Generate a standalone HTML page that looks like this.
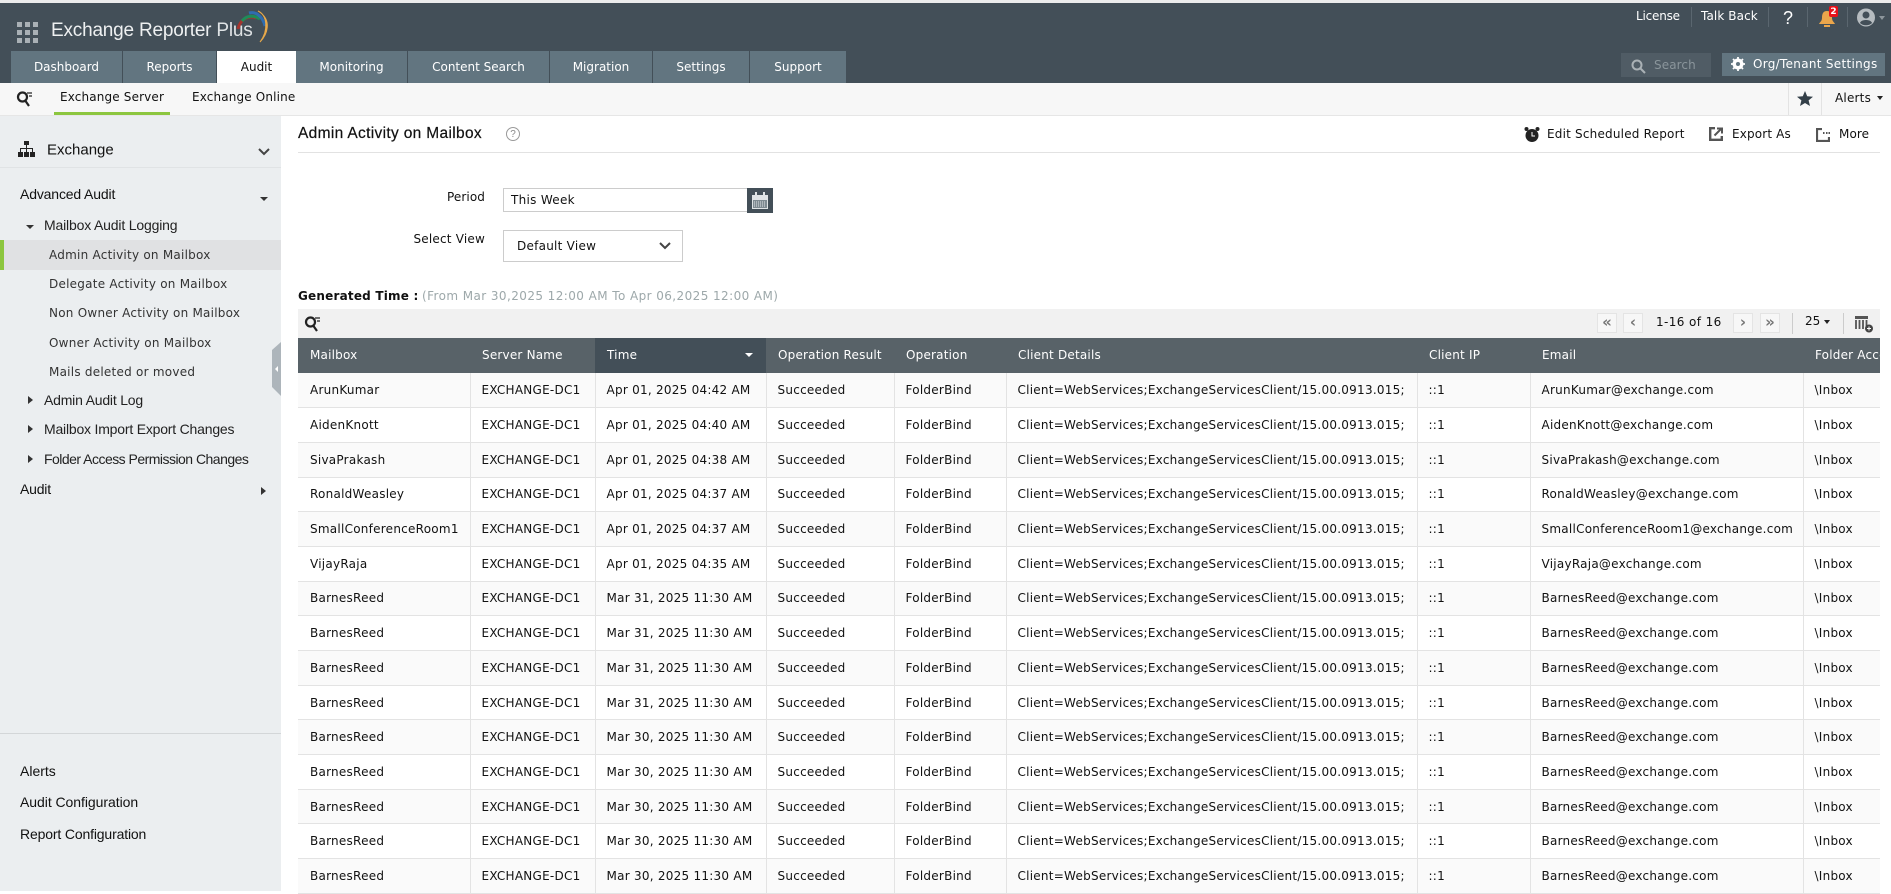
<!DOCTYPE html>
<html><head><meta charset="utf-8"><style>
*{box-sizing:border-box}
html,body{margin:0;padding:0;width:1891px;height:891px;overflow:hidden;background:#fff;font-family:"DejaVu Sans","Liberation Sans",sans-serif;font-size:12px;color:#111}
.a{position:absolute;white-space:nowrap}
.c{display:flex;align-items:center;justify-content:center}
.tab{position:absolute;top:51px;height:32px;background:#627580;color:#fff;display:flex;align-items:center;justify-content:center;border-right:1px solid #434f58;letter-spacing:0}
.m{position:absolute;white-space:nowrap;color:#333;letter-spacing:.24px;transform:translateY(-50%)}
.s{position:absolute;white-space:nowrap;font-family:"Liberation Sans",sans-serif;font-size:14px;color:#111;transform:translateY(-50%)}
table{position:absolute;left:298px;top:338px;width:1582px;border-collapse:collapse;table-layout:fixed}
th{height:35px;background:#586268;color:#fff;font-weight:400;text-align:left;padding:0 0 2px 12px;white-space:nowrap;overflow:hidden;letter-spacing:.2px}
td{height:34.7px;padding:0 0 0 11px;border-right:1px solid #e3e3e3;border-bottom:1px solid #e3e3e3;white-space:nowrap;overflow:hidden;letter-spacing:.25px;color:#111}
td:first-child{padding-left:12px}
tr:nth-child(odd) td{background:#fafafa}
tr td:last-child{border-right:0}
th.t{background:#434f58}
.pb{position:absolute;top:313px;width:20px;height:20px;border:1px solid #e4e4e4;background:#f7f7f7;color:#777;font-size:15px;display:flex;align-items:center;justify-content:center;font-weight:bold;padding-bottom:2px}
</style></head><body>
<div class="a" style="left:0;top:0;width:1891px;height:3px;background:#ececec"></div>
<div class="a" style="left:0;top:3px;width:1891px;height:80px;background:#434f58"></div>
<svg class="a" style="left:17px;top:22px" width="21" height="21" fill="#a9b0b5"><rect x="0" y="0" width="5" height="5"/><rect x="8" y="0" width="5" height="5"/><rect x="16" y="0" width="5" height="5"/><rect x="0" y="8" width="5" height="5"/><rect x="8" y="8" width="5" height="5"/><rect x="16" y="8" width="5" height="5"/><rect x="0" y="16" width="5" height="5"/><rect x="8" y="16" width="5" height="5"/><rect x="16" y="16" width="5" height="5"/></svg>
<div class="a" style="left:51px;top:20px;font-family:'Liberation Sans',sans-serif;font-size:19px;color:#eef0f1;line-height:22px;letter-spacing:-.2px">Exchange Reporter <span style="font-weight:400;color:#dfe3e5">Plus</span></div>
<svg class="a" style="left:236px;top:8px" width="36" height="36" fill="none"><path d="M2 21C4 11 13 7 20 10" stroke="#a5342e" stroke-width="3"/><path d="M6 13C11 7 18 7 24 11" stroke="#1f8c58" stroke-width="3"/><path d="M13 5C20 3 27 9 29 18" stroke="#2f6db0" stroke-width="3"/><path d="M22 3C31 7 33 22 24 34C31 27 37 12 22 3Z" fill="#e8a94a" stroke="#e8a94a"/></svg>
<div class="tab" style="left:11px;width:112px">Dashboard</div>
<div class="tab" style="left:123px;width:94px">Reports</div>
<div class="tab" style="left:217px;width:79px;background:#fff;color:#111;border:0">Audit</div>
<div class="tab" style="left:296px;width:112px">Monitoring</div>
<div class="tab" style="left:408px;width:142px">Content Search</div>
<div class="tab" style="left:550px;width:103px">Migration</div>
<div class="tab" style="left:653px;width:97px">Settings</div>
<div class="tab" style="left:750px;width:96px;border:0">Support</div>

<div class="a" style="left:1636px;top:8px;color:#fff;line-height:16px;letter-spacing:-.2px">License</div>
<div class="a" style="left:1701px;top:8px;color:#fff;line-height:16px;letter-spacing:.1px">Talk Back</div>
<div class="a" style="left:1691px;top:7px;width:1px;height:20px;background:#5a666f"></div>
<div class="a" style="left:1768px;top:7px;width:1px;height:20px;background:#5a666f"></div>
<div class="a" style="left:1807px;top:7px;width:1px;height:20px;background:#5a666f"></div>
<div class="a" style="left:1847px;top:7px;width:1px;height:20px;background:#5a666f"></div>
<div class="a" style="left:1783px;top:8px;color:#fff;font-size:18px;line-height:21px;font-family:'Liberation Sans',sans-serif">?</div>
<svg class="a" style="left:1818px;top:10px" width="18" height="18"><path d="M9 1C5 1 4 4 4 8C4 11 2 12 1 14H17C16 12 14 11 14 8C14 4 13 1 9 1Z" fill="#eba64b"/><rect x="6" y="15" width="6" height="2" fill="#eba64b"/></svg>
<div class="a c" style="left:1829px;top:6px;width:9px;height:11px;background:#e8121a;color:#fff;font-size:9px;border-radius:2px;font-weight:bold">2</div>
<svg class="a" style="left:1857px;top:8px" width="18" height="19"><circle cx="9" cy="9.5" r="9" fill="#b6bcc0"/><circle cx="9" cy="7" r="3.5" fill="#434f58"/><path d="M3 15C4 11 14 11 15 15C12 18 6 18 3 15Z" fill="#434f58"/></svg>
<div class="a" style="left:1879px;top:16px;border:3.5px solid transparent;border-top:4px solid #8d969c"></div>
<div class="a" style="left:1621px;top:53px;width:90px;height:24px;background:#505c65"></div>
<svg class="a" style="left:1631px;top:59px" width="15" height="15" fill="none" stroke="#aab1b5" stroke-width="2"><circle cx="6" cy="6" r="4.5"/><path d="M9.5 9.5L14 14"/></svg>
<div class="a" style="left:1654px;top:57px;color:#8a959b;line-height:16px;letter-spacing:.1px">Search</div>
<div class="a" style="left:1722px;top:53px;width:163px;height:23px;background:#627580"></div>
<svg class="a" style="left:1731px;top:57px" width="14" height="14"><circle cx="7" cy="7" r="4" fill="none" stroke="#fff" stroke-width="3"/><path d="M7 0V14M0 7H14M2 2L12 12M12 2L2 12" stroke="#fff" stroke-width="1.8"/><circle cx="7" cy="7" r="2" fill="#627580"/></svg>
<div class="a" style="left:1753px;top:56px;color:#fff;line-height:16px;letter-spacing:.3px">Org/Tenant Settings</div>

<div class="a" style="left:0;top:83px;width:1891px;height:33px;background:#f7f7f7;border-bottom:1px solid #e6e6e6"></div>
<svg class="a" style="left:16px;top:90px" width="17" height="18" fill="none" stroke="#222" stroke-width="2.2"><circle cx="6.5" cy="7" r="4.5"/><path d="M9.5 11L13 16"/><path d="M11 3H16M13 6H16" stroke-width="1.2"/></svg>
<div class="a" style="left:60px;top:89px;line-height:16px;letter-spacing:.15px">Exchange Server</div>
<div class="a" style="left:192px;top:89px;line-height:16px;letter-spacing:.15px">Exchange Online</div>
<div class="a" style="left:54px;top:112px;width:116px;height:3px;background:#8cc63f"></div>
<div class="a" style="left:1788px;top:83px;width:1px;height:32px;background:#e3e3e3"></div>
<div class="a" style="left:1821px;top:83px;width:1px;height:32px;background:#e3e3e3"></div>
<svg class="a" style="left:1797px;top:91px" width="16" height="15"><path d="M8 0L10.2 5.2L16 5.7L11.6 9.4L13 15L8 12L3 15L4.4 9.4L0 5.7L5.8 5.2Z" fill="#333f48"/></svg>
<div class="a" style="left:1835px;top:90px;line-height:16px;letter-spacing:.2px">Alerts</div>
<div class="a" style="left:1877px;top:96px;border:3.5px solid transparent;border-top:4px solid #222"></div>

<div class="a" style="left:0;top:116px;width:281px;height:775px;background:#ebeef0"></div>
<div class="a" style="left:0;top:167px;width:281px;height:1px;background:#e0e3e5"></div>
<svg class="a" style="left:18px;top:141px" width="17" height="17" fill="#222"><rect x="6" y="0" width="5" height="4"/><rect x="8" y="4" width="1" height="3"/><rect x="2" y="7" width="13" height="1"/><rect x="2" y="7" width="1" height="4"/><rect x="8" y="7" width="1" height="4"/><rect x="14" y="7" width="1" height="4"/><rect x="0" y="11" width="5" height="5"/><rect x="6" y="11" width="5" height="5"/><rect x="12" y="11" width="5" height="5"/></svg>
<div class="s" style="left:47px;top:150px;font-size:15px">Exchange</div>
<svg class="a" style="left:258px;top:148px" width="12" height="8" fill="none" stroke="#444" stroke-width="2"><path d="M1 1L6 6L11 1"/></svg>
<div class="s" style="left:20px;top:194px;letter-spacing:-.15px">Advanced Audit</div>
<div class="a" style="left:260px;top:197px;border:4px solid transparent;border-top:4px solid #333"></div>
<div class="a" style="left:26px;top:225px;border:4px solid transparent;border-top:4px solid #333"></div>
<div class="s" style="left:44px;top:225px;color:#222;letter-spacing:-.17px">Mailbox Audit Logging</div>
<div class="a" style="left:0;top:240px;width:281px;height:30px;background:#e0e1e3"></div>
<div class="a" style="left:0;top:240px;width:4px;height:30px;background:#8cc63f"></div>
<div class="m" style="left:49px;top:255px">Admin Activity on Mailbox</div>
<div class="m" style="left:49px;top:284px">Delegate Activity on Mailbox</div>
<div class="m" style="left:49px;top:313px">Non Owner Activity on Mailbox</div>
<div class="m" style="left:49px;top:343px">Owner Activity on Mailbox</div>
<div class="m" style="left:49px;top:372px">Mails deleted or moved</div>
<div class="a" style="left:28px;top:396px;border:4px solid transparent;border-left:5px solid #333"></div>
<div class="s" style="left:44px;top:400px;color:#222;letter-spacing:-.2px">Admin Audit Log</div>
<div class="a" style="left:28px;top:425px;border:4px solid transparent;border-left:5px solid #333"></div>
<div class="s" style="left:44px;top:429px;color:#222;letter-spacing:-.2px">Mailbox Import Export Changes</div>
<div class="a" style="left:28px;top:455px;border:4px solid transparent;border-left:5px solid #333"></div>
<div class="s" style="left:44px;top:459px;color:#222;letter-spacing:-.52px">Folder Access Permission Changes</div>
<div class="s" style="left:20px;top:489px;letter-spacing:-.2px">Audit</div>
<div class="a" style="left:261px;top:487px;border:4px solid transparent;border-left:5px solid #333"></div>
<svg class="a" style="left:272px;top:342px" width="9" height="54"><path d="M9 0V54L0 45V8Z" fill="#adb5bb"/><path d="M3 27L6 24V30Z" fill="#fff"/></svg>
<div class="a" style="left:0;top:733px;width:281px;height:1px;background:#d3d6d8"></div>
<div class="s" style="left:20px;top:771px">Alerts</div>
<div class="s" style="left:20px;top:802px;letter-spacing:-.05px">Audit Configuration</div>
<div class="s" style="left:20px;top:834px;letter-spacing:-.15px">Report Configuration</div>

<div class="s" style="left:298px;top:134px;font-size:15.5px;letter-spacing:.33px;-webkit-text-stroke:.2px #111">Admin Activity on Mailbox</div>
<div class="a c" style="left:506px;top:127px;width:14px;height:14px;border:1.5px solid #999;border-radius:50%;color:#888;font-size:10px;font-family:'Liberation Sans',sans-serif">?</div>
<div class="a" style="left:298px;top:152px;width:1582px;height:1px;background:#e2e2e2"></div>
<svg class="a" style="left:1524px;top:126px" width="16" height="17"><circle cx="8" cy="9.5" r="6.5" fill="#222"/><circle cx="2.5" cy="3" r="2" fill="#222"/><circle cx="13.5" cy="3" r="2" fill="#222"/><path d="M8 6V10H11" stroke="#fff" fill="none"/></svg>
<div class="a" style="left:1547px;top:126px;line-height:16px;letter-spacing:.2px">Edit Scheduled Report</div>
<svg class="a" style="left:1709px;top:127px" width="14" height="14" fill="none" stroke="#555" stroke-width="2.4"><path d="M6 1.2H1.2V12.8H12.8V9"/><path d="M5.5 8.5L12 2M8 1.5H13V6.5" stroke-width="2"/></svg>
<div class="a" style="left:1732px;top:126px;line-height:16px;letter-spacing:.15px">Export As</div>
<svg class="a" style="left:1816px;top:128px" width="14" height="14" fill="none" stroke="#555" stroke-width="2.2"><path d="M6 1H1V13H13V9"/><path d="M7 5H8.5M10 5H11.5M12.5 5H14" stroke-width="2"/></svg>
<div class="a" style="left:1839px;top:126px;line-height:16px;letter-spacing:.1px">More</div>

<div class="a" style="right:1406px;top:189px;line-height:16px;letter-spacing:.1px">Period</div>
<div class="a" style="left:503px;top:188px;width:245px;height:24px;border:1px solid #ccc;padding-left:7px;line-height:22px;letter-spacing:.3px">This Week</div>
<div class="a" style="left:747px;top:188px;width:26px;height:25px;background:#434f58"></div>
<svg class="a" style="left:751px;top:192px" width="18" height="18"><rect x="1" y="3" width="16" height="14" fill="#dfe3e5"/><rect x="2" y="8" width="14" height="8" fill="#7e8a91"/><path d="M3 10H15M3 12H15M3 14H15" stroke="#dfe3e5" stroke-dasharray="1 1"/><rect x="4" y="0" width="2" height="5" fill="#dfe3e5"/><rect x="12" y="0" width="2" height="5" fill="#dfe3e5"/></svg>
<div class="a" style="right:1406px;top:231px;line-height:16px;letter-spacing:.2px">Select View</div>
<div class="a" style="left:503px;top:230px;width:180px;height:32px;border:1px solid #ccc;padding-left:13px;line-height:30px;letter-spacing:.25px">Default View</div>
<svg class="a" style="left:659px;top:242px" width="12" height="8" fill="none" stroke="#444" stroke-width="2"><path d="M1 1L6 6L11 1"/></svg>
<div class="a" style="left:298px;top:288px;line-height:16px;font-weight:bold;letter-spacing:.2px;font-size:12px">Generated Time :</div>
<div class="a" style="left:422px;top:288px;line-height:16px;color:#9da8aa;letter-spacing:.42px">(From Mar 30,2025 12:00 AM To Apr 06,2025 12:00 AM)</div>

<div class="a" style="left:298px;top:309px;width:1582px;height:29px;background:#f1f1f1"></div>
<svg class="a" style="left:304px;top:315px" width="17" height="17" fill="none" stroke="#222" stroke-width="2.2"><circle cx="6.5" cy="7" r="4.5"/><path d="M9.5 11L13 16"/><path d="M11 3H16M13 6H16" stroke-width="1.2"/></svg>
<div class="pb" style="left:1597px">«</div><div class="pb" style="left:1623px">‹</div>
<div class="a" style="left:1656px;top:314px;line-height:16px;letter-spacing:.4px">1-16 of 16</div>
<div class="pb" style="left:1733px">›</div><div class="pb" style="left:1760px">»</div>
<div class="a" style="left:1792px;top:313px;width:1px;height:21px;background:#ccc"></div>
<div class="a" style="left:1805px;top:313px;line-height:16px">25</div>
<div class="a" style="left:1824px;top:320px;border:3.5px solid transparent;border-top:4px solid #222"></div>
<div class="a" style="left:1843px;top:313px;width:1px;height:21px;background:#ccc"></div>
<svg class="a" style="left:1855px;top:316px" width="19" height="17"><rect x="0" y="0" width="13" height="3" fill="#555"/><path d="M1 4V13M4.5 4V13M8 4V13M11.500 4V11" stroke="#555" stroke-width="1.8"/><circle cx="14" cy="12.500" r="4" fill="#444"/><path d="M12 12.500H16M14 10.500V14.500" stroke="#fff"/></svg>

<table><colgroup><col style="width:172px"><col style="width:125px"><col style="width:171px"><col style="width:128px"><col style="width:112px"><col style="width:411px"><col style="width:113px"><col style="width:273px"><col style="width:77px"></colgroup>
<thead><tr><th>Mailbox</th><th>Server Name</th><th class="t">Time<span style="float:right;margin:5px 13px 0 0;border:4px solid transparent;border-top:4px solid #fff"></span></th><th>Operation Result</th><th>Operation</th><th>Client Details</th><th>Client IP</th><th>Email</th><th>Folder Access</th></tr></thead>
<tbody>
<tr><td>ArunKumar</td><td>EXCHANGE-DC1</td><td>Apr 01, 2025 04:42 AM</td><td>Succeeded</td><td>FolderBind</td><td>Client=WebServices;ExchangeServicesClient/15.00.0913.015;</td><td>::1</td><td>ArunKumar@exchange.com</td><td>\Inbox</td></tr>
<tr><td>AidenKnott</td><td>EXCHANGE-DC1</td><td>Apr 01, 2025 04:40 AM</td><td>Succeeded</td><td>FolderBind</td><td>Client=WebServices;ExchangeServicesClient/15.00.0913.015;</td><td>::1</td><td>AidenKnott@exchange.com</td><td>\Inbox</td></tr>
<tr><td>SivaPrakash</td><td>EXCHANGE-DC1</td><td>Apr 01, 2025 04:38 AM</td><td>Succeeded</td><td>FolderBind</td><td>Client=WebServices;ExchangeServicesClient/15.00.0913.015;</td><td>::1</td><td>SivaPrakash@exchange.com</td><td>\Inbox</td></tr>
<tr><td>RonaldWeasley</td><td>EXCHANGE-DC1</td><td>Apr 01, 2025 04:37 AM</td><td>Succeeded</td><td>FolderBind</td><td>Client=WebServices;ExchangeServicesClient/15.00.0913.015;</td><td>::1</td><td>RonaldWeasley@exchange.com</td><td>\Inbox</td></tr>
<tr><td>SmallConferenceRoom1</td><td>EXCHANGE-DC1</td><td>Apr 01, 2025 04:37 AM</td><td>Succeeded</td><td>FolderBind</td><td>Client=WebServices;ExchangeServicesClient/15.00.0913.015;</td><td>::1</td><td>SmallConferenceRoom1@exchange.com</td><td>\Inbox</td></tr>
<tr><td>VijayRaja</td><td>EXCHANGE-DC1</td><td>Apr 01, 2025 04:35 AM</td><td>Succeeded</td><td>FolderBind</td><td>Client=WebServices;ExchangeServicesClient/15.00.0913.015;</td><td>::1</td><td>VijayRaja@exchange.com</td><td>\Inbox</td></tr>
<tr><td>BarnesReed</td><td>EXCHANGE-DC1</td><td>Mar 31, 2025 11:30 AM</td><td>Succeeded</td><td>FolderBind</td><td>Client=WebServices;ExchangeServicesClient/15.00.0913.015;</td><td>::1</td><td>BarnesReed@exchange.com</td><td>\Inbox</td></tr>
<tr><td>BarnesReed</td><td>EXCHANGE-DC1</td><td>Mar 31, 2025 11:30 AM</td><td>Succeeded</td><td>FolderBind</td><td>Client=WebServices;ExchangeServicesClient/15.00.0913.015;</td><td>::1</td><td>BarnesReed@exchange.com</td><td>\Inbox</td></tr>
<tr><td>BarnesReed</td><td>EXCHANGE-DC1</td><td>Mar 31, 2025 11:30 AM</td><td>Succeeded</td><td>FolderBind</td><td>Client=WebServices;ExchangeServicesClient/15.00.0913.015;</td><td>::1</td><td>BarnesReed@exchange.com</td><td>\Inbox</td></tr>
<tr><td>BarnesReed</td><td>EXCHANGE-DC1</td><td>Mar 31, 2025 11:30 AM</td><td>Succeeded</td><td>FolderBind</td><td>Client=WebServices;ExchangeServicesClient/15.00.0913.015;</td><td>::1</td><td>BarnesReed@exchange.com</td><td>\Inbox</td></tr>
<tr><td>BarnesReed</td><td>EXCHANGE-DC1</td><td>Mar 30, 2025 11:30 AM</td><td>Succeeded</td><td>FolderBind</td><td>Client=WebServices;ExchangeServicesClient/15.00.0913.015;</td><td>::1</td><td>BarnesReed@exchange.com</td><td>\Inbox</td></tr>
<tr><td>BarnesReed</td><td>EXCHANGE-DC1</td><td>Mar 30, 2025 11:30 AM</td><td>Succeeded</td><td>FolderBind</td><td>Client=WebServices;ExchangeServicesClient/15.00.0913.015;</td><td>::1</td><td>BarnesReed@exchange.com</td><td>\Inbox</td></tr>
<tr><td>BarnesReed</td><td>EXCHANGE-DC1</td><td>Mar 30, 2025 11:30 AM</td><td>Succeeded</td><td>FolderBind</td><td>Client=WebServices;ExchangeServicesClient/15.00.0913.015;</td><td>::1</td><td>BarnesReed@exchange.com</td><td>\Inbox</td></tr>
<tr><td>BarnesReed</td><td>EXCHANGE-DC1</td><td>Mar 30, 2025 11:30 AM</td><td>Succeeded</td><td>FolderBind</td><td>Client=WebServices;ExchangeServicesClient/15.00.0913.015;</td><td>::1</td><td>BarnesReed@exchange.com</td><td>\Inbox</td></tr>
<tr><td>BarnesReed</td><td>EXCHANGE-DC1</td><td>Mar 30, 2025 11:30 AM</td><td>Succeeded</td><td>FolderBind</td><td>Client=WebServices;ExchangeServicesClient/15.00.0913.015;</td><td>::1</td><td>BarnesReed@exchange.com</td><td>\Inbox</td></tr>
</tbody></table>
</body></html>
